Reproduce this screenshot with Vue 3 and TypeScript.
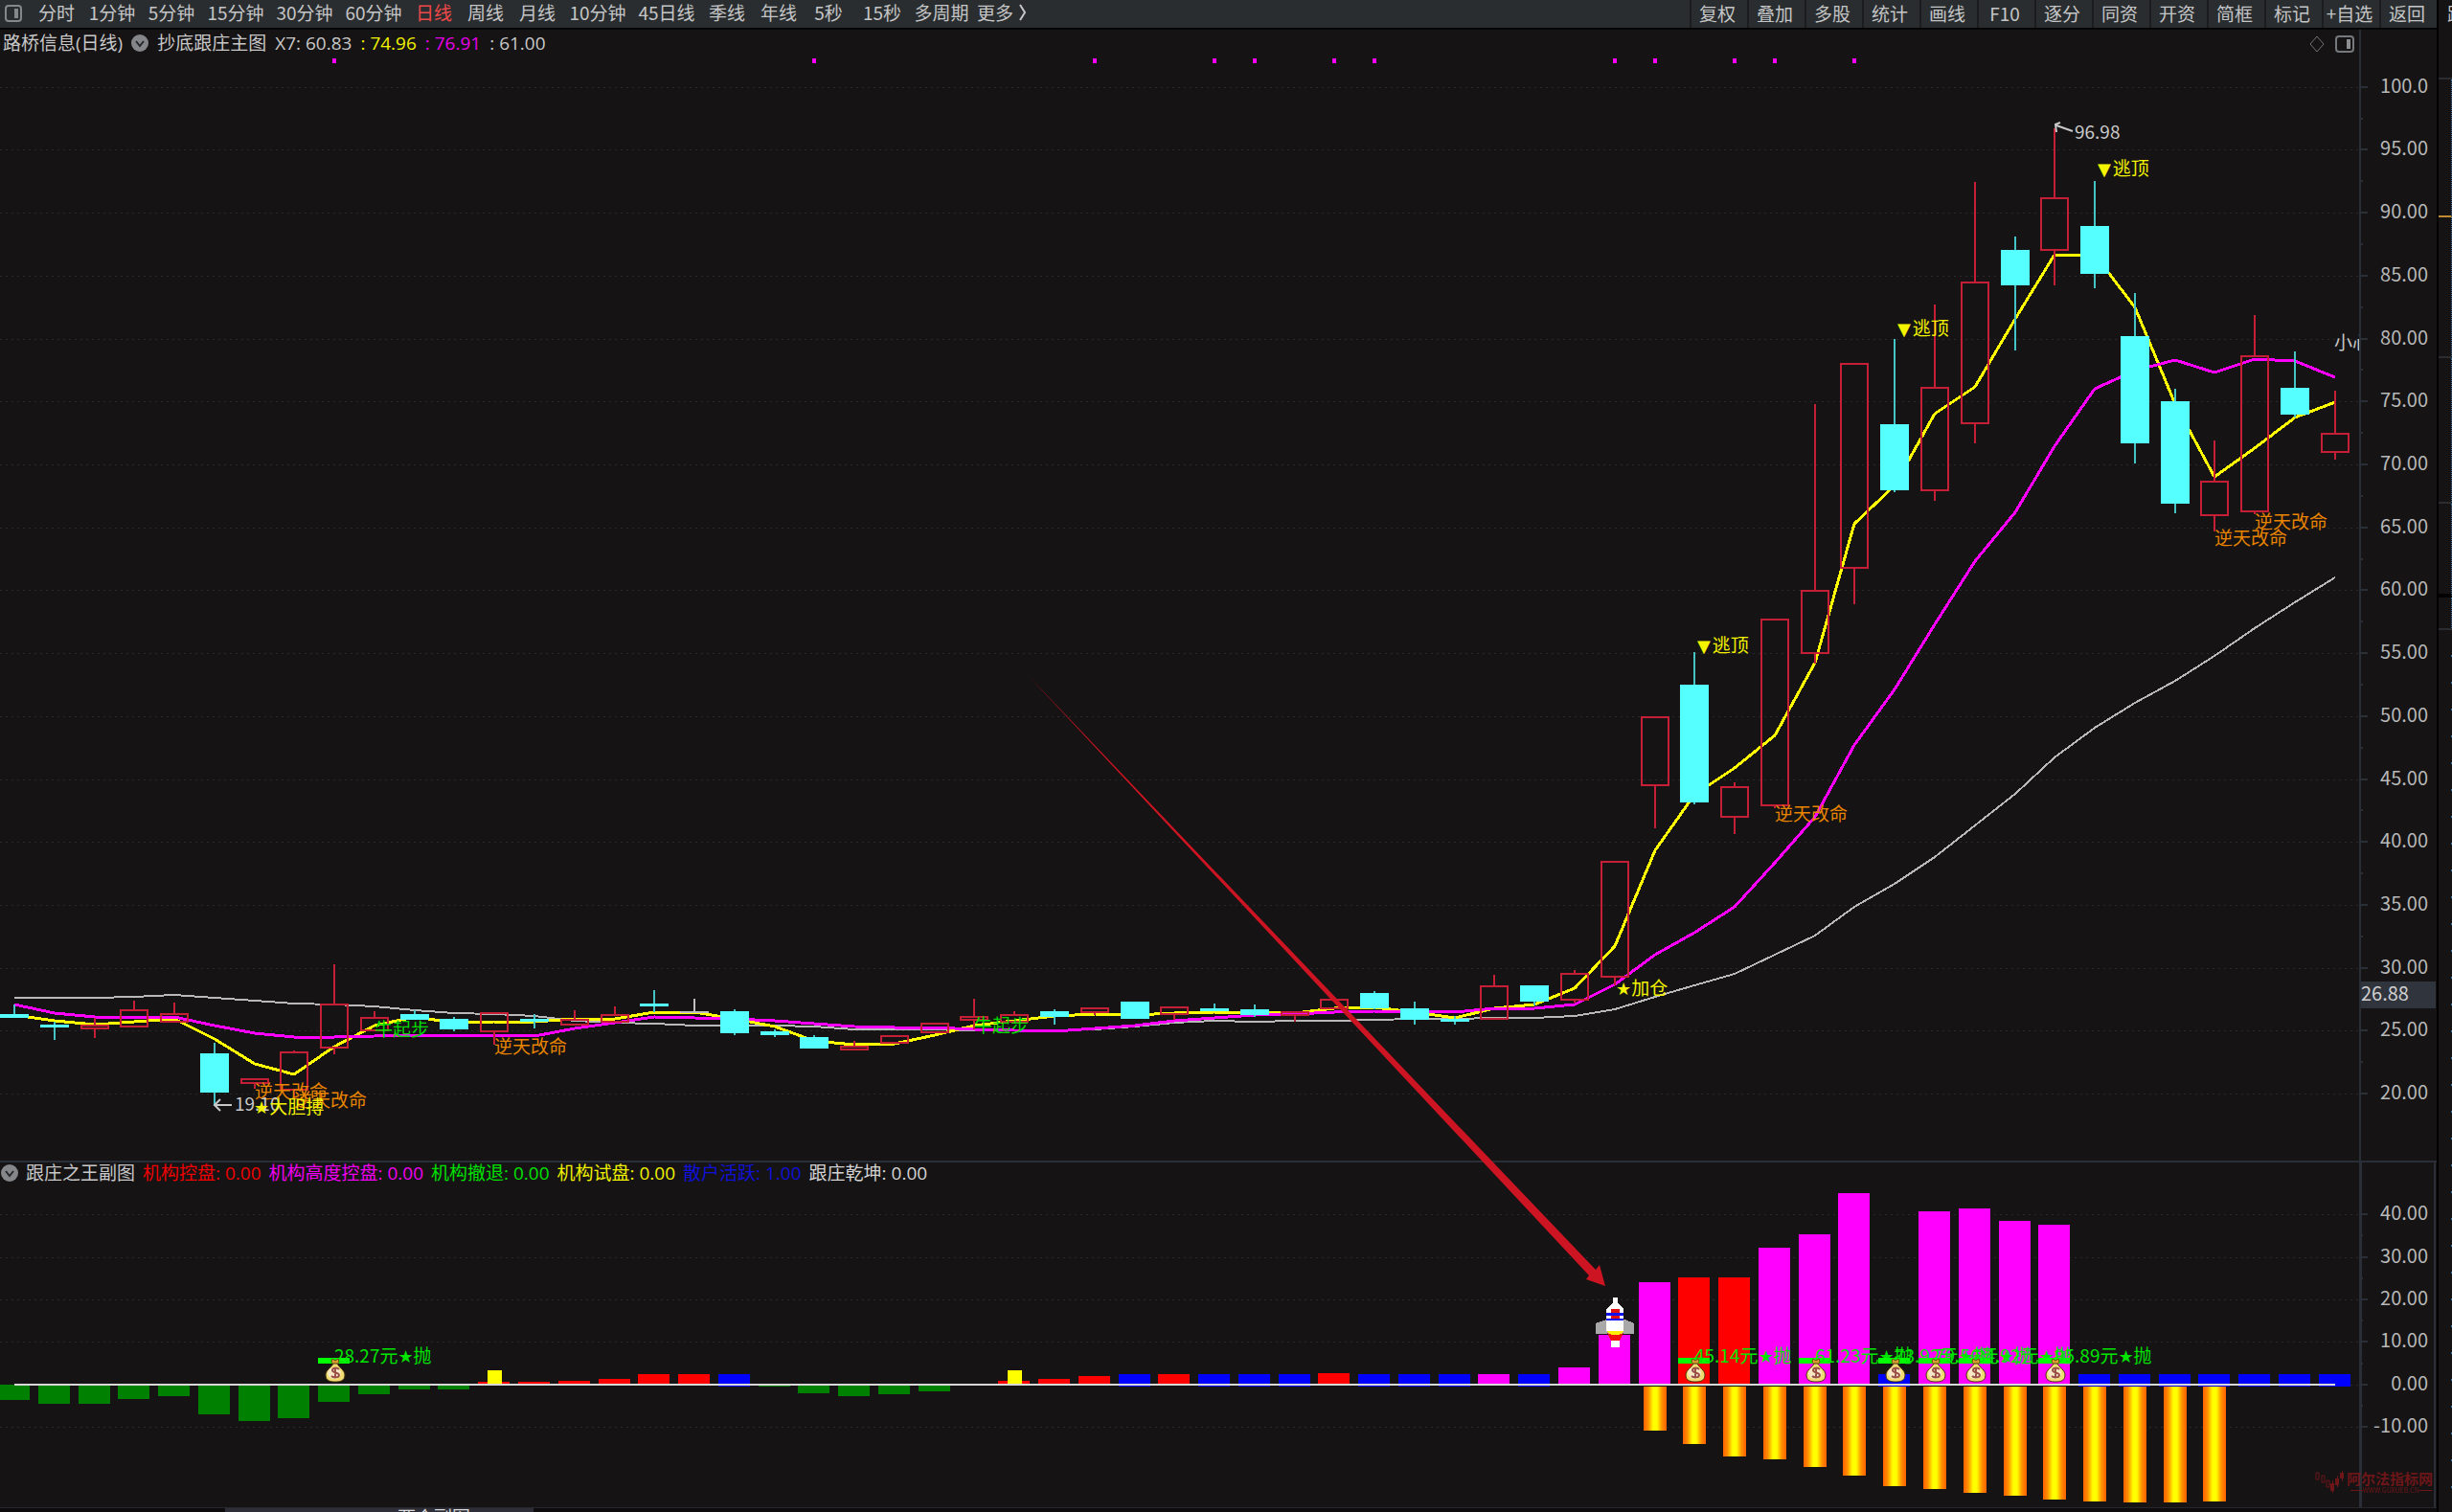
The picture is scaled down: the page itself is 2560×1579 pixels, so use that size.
<script setup lang="ts">
type Tone = 'up' | 'down' | 'flat'
type Candle = [tone: Tone, high: number, top: number, bottom: number, low: number]
type Bar = [index: number, color: string, top: number, bottom: number]

const periods: { label: string; size: string; active?: boolean }[] = [
  { label: '分时', size: 'm' },
  { label: '1分钟', size: 'l' },
  { label: '5分钟', size: 'l' },
  { label: '15分钟', size: 'xl' },
  { label: '30分钟', size: 'xl' },
  { label: '60分钟', size: 'xl' },
  { label: '日线', size: 'm', active: true },
  { label: '周线', size: 'm' },
  { label: '月线', size: 'm' },
  { label: '10分钟', size: 'xl' },
  { label: '45日线', size: 'xl' },
  { label: '季线', size: 'm' },
  { label: '年线', size: 'm' },
  { label: '5秒', size: 's' },
  { label: '15秒', size: 'l' },
  { label: '多周期', size: 'l' },
]
const tools = ['复权', '叠加', '多股', '统计', '画线', 'F10', '逐分', '同资', '开资', '简框', '标记', '+自选', '返回']

const plotRight = 2463
const cx = (i: number) => Math.round(15 + i * 41.77)

const priceY = (v: number) => Math.round(90.7 + (100 - v) * 13.143)
const priceLevels = Array.from({ length: 17 }, (_, k) => 100 - k * 5)
const priceLabel = (v: number) => (v === 100 ? '100.0' : v.toFixed(2))
const subY = (v: number) => Math.round(1445.7 - v * 4.44)
const subLevels = [40, 30, 20, 10, 0, -10]

// High, body top, body bottom and low of each day, as chart ordinates
const candles: Candle[] = [
  ['down', 1049, 1059, 1063, 1063],
  ['down', 1067, 1070, 1073, 1086],
  ['up', 1063, 1071, 1074, 1084],
  ['up', 1045, 1055, 1072, 1072],
  ['up', 1047, 1059, 1067, 1067],
  ['down', 1089, 1100, 1141, 1155],
  ['up', 1127, 1127, 1131, 1137],
  ['up', 1097, 1099, 1138, 1146],
  ['up', 1007, 1049, 1094, 1101],
  ['up', 1056, 1063, 1076, 1076],
  ['down', 1055, 1059, 1065, 1065],
  ['down', 1062, 1064, 1075, 1077],
  ['up', 1058, 1058, 1077, 1091],
  ['down', 1059, 1064, 1067, 1074],
  ['up', 1055, 1065, 1070, 1070],
  ['up', 1051, 1060, 1067, 1067],
  ['down', 1034, 1048, 1051, 1057],
  ['flat', 1043, 1056, 1058, 1058],
  ['down', 1054, 1056, 1079, 1081],
  ['down', 1075, 1077, 1081, 1083],
  ['down', 1081, 1083, 1095, 1095],
  ['up', 1087, 1093, 1096, 1096],
  ['up', 1082, 1082, 1089, 1089],
  ['up', 1069, 1069, 1078, 1078],
  ['up', 1043, 1062, 1065, 1075],
  ['up', 1056, 1060, 1067, 1067],
  ['down', 1054, 1056, 1062, 1070],
  ['up', 1053, 1053, 1057, 1060],
  ['down', 1046, 1046, 1064, 1064],
  ['up', 1052, 1052, 1059, 1065],
  ['down', 1048, 1053, 1056, 1056],
  ['down', 1049, 1054, 1060, 1062],
  ['up', 1057, 1057, 1060, 1067],
  ['up', 1044, 1044, 1053, 1053],
  ['down', 1035, 1037, 1053, 1054],
  ['down', 1046, 1053, 1065, 1070],
  ['down', 1061, 1064, 1067, 1070],
  ['up', 1018, 1030, 1064, 1064],
  ['down', 1029, 1029, 1046, 1050],
  ['up', 1013, 1017, 1044, 1047],
  ['up', 900, 900, 1020, 1029],
  ['up', 749, 749, 820, 865],
  ['down', 681, 715, 838, 840],
  ['up', 817, 822, 853, 871],
  ['up', 647, 647, 841, 844],
  ['up', 422, 617, 682, 693],
  ['up', 380, 380, 593, 631],
  ['down', 354, 443, 512, 514],
  ['up', 318, 405, 512, 523],
  ['up', 190, 295, 442, 463],
  ['down', 247, 261, 298, 366],
  ['up', 134, 207, 261, 298],
  ['down', 189, 236, 286, 301],
  ['down', 306, 351, 463, 484],
  ['down', 406, 419, 526, 536],
  ['up', 460, 503, 538, 555],
  ['up', 329, 372, 534, 537],
  ['down', 367, 405, 433, 436],
  ['up', 408, 453, 472, 480],
]

const fast = [1060, 1066, 1070, 1067, 1064, 1085, 1111, 1122, 1093, 1071, 1062, 1068, 1067, 1067, 1064, 1064, 1057, 1057, 1064, 1072, 1087, 1091, 1090, 1081, 1071, 1066, 1061, 1059, 1060, 1058, 1057, 1057, 1058, 1053, 1052, 1057, 1063, 1053, 1049, 1032, 988, 888, 830, 802, 768, 692, 547, 507, 432, 404, 333, 266, 266, 321, 422, 498, 468, 436, 420]
const middle = [1049, 1058, 1062, 1062, 1062, 1071, 1079, 1083, 1083, 1082, 1081, 1081, 1081, 1082, 1074, 1068, 1062, 1063, 1064, 1066, 1069, 1072, 1073, 1073, 1075, 1076, 1077, 1074, 1071, 1066, 1063, 1060, 1059, 1057, 1056, 1056, 1057, 1053, 1053, 1049, 1028, 997, 974, 947, 901, 853, 778, 720, 652, 586, 535, 466, 406, 387, 376, 389, 375, 377, 394]
const slow = [1042, 1042, 1042, 1041, 1039, 1042, 1045, 1048, 1049, 1051, 1055, 1058, 1059, 1061, 1066, 1068, 1069, 1071, 1071, 1071, 1072, 1075, 1075, 1075, 1076, 1076, 1076, 1075, 1072, 1068, 1066, 1067, 1066, 1066, 1065, 1064, 1064, 1063, 1063, 1061, 1054, 1041, 1029, 1017, 997, 977, 947, 923, 895, 862, 829, 791, 760, 734, 711, 685, 656, 629, 603]
const trace = (ys: number[]) => ys.map((y, i) => `${cx(i)},${y}`).join(' ')

const alertDots = [8, 20, 27, 30, 31, 33, 34, 40, 41, 43, 44, 46]

const turnLabels: [number, number][] = [[6, 1147], [7, 1156], [12, 1100], [44, 857], [55, 569], [56, 552]]
const escapeLabels: [number, number][] = [[42, 681], [47, 350], [52, 183]]
const startLabels: [number, number][] = [[9, 1082], [24, 1078]]

const GREEN = '#008000'
const RED = '#ff0000'
const BLUE = '#0000ff'
const PINK = '#ff00ff'
const dropBars: Bar[] = ([[0, 1462], [1, 1466], [2, 1466], [3, 1461], [4, 1458], [5, 1477], [6, 1484], [7, 1481], [8, 1464], [9, 1456], [10, 1451], [11, 1451], [19, 1448], [20, 1455], [21, 1458], [22, 1456], [23, 1453]] as [number, number][])
  .map(([i, bottom]) => [i, GREEN, 1446, bottom])
const redBars: Bar[] = ([[12, 1443], [13, 1443], [14, 1442], [15, 1440], [16, 1435], [17, 1435], [25, 1442], [26, 1440], [27, 1437], [29, 1435], [33, 1434], [42, 1334], [43, 1334]] as [number, number][])
  .map(([i, top]) => [i, RED, top, 1446])
const pinkBars: Bar[] = ([[37, 1435], [39, 1428], [40, 1394], [41, 1339], [44, 1303], [45, 1289], [46, 1246], [48, 1265], [49, 1262], [50, 1275], [51, 1279]] as [number, number][])
  .map(([i, top]) => [i, PINK, top, 1446])
const blueBars: Bar[] = [18, 28, 30, 31, 32, 34, 35, 36, 38, 47, 52, 53, 54, 55, 56, 57, 58].map((i) => [i, BLUE, 1435, 1448])
const bars: Bar[] = [...dropBars, ...redBars, ...pinkBars, ...blueBars]
const probes = [12, 25]

const goldBars: [number, number][] = [[41, 1494], [42, 1508], [43, 1521], [44, 1524], [45, 1532], [46, 1541], [47, 1552], [48, 1555], [49, 1559], [50, 1562], [51, 1566], [52, 1568], [53, 1569], [54, 1569], [55, 1568]]
const sells: [number, string][] = [[8, '28.27'], [42, '45.14'], [45, '61.23'], [47, '73.92'], [48, '79.56'], [49, '84.92'], [51, '95.89']]

const subLegend = [
  { name: '机构控盘', value: '0.00', color: '#f00000' },
  { name: '机构高度控盘', value: '0.00', color: '#f000f0' },
  { name: '机构撤退', value: '0.00', color: '#00e000' },
  { name: '机构试盘', value: '0.00', color: '#f0f000' },
  { name: '散户活跃', value: '1.00', color: '#1010d8' },
  { name: '跟庄乾坤', value: '0.00', color: '#d4d4d4' },
]
</script>

<template>
  <div class="terminal">
    <main class="workspace">
      <header class="toolbar">
        <button class="layout-btn" aria-label="布局">
          <svg width="18" height="18" viewBox="0 0 18 18"><rect x="1" y="1" width="16" height="16" rx="3" fill="none" stroke="#85888b" stroke-width="2" /><rect x="10" y="4" width="4" height="10" fill="#85888b" /></svg>
        </button>
        <nav class="periods">
          <button v-for="p in periods" :key="p.label" :class="['period', p.size, { active: p.active }]">{{ p.label }}</button>
          <button class="period more">更多
            <svg width="8" height="18" viewBox="0 0 8 18"><path d="M1 1l5 8-5 8" fill="none" stroke="currentColor" stroke-width="2" /></svg>
          </button>
        </nav>
        <nav class="tools">
          <button v-for="t in tools" :key="t" class="tool">{{ t }}</button>
        </nav>
      </header>

      <section class="panel">
        <div class="legend">
          <span>路桥信息(日线)</span>
          <button class="fold" aria-label="折叠主图"><svg width="18" height="18" viewBox="0 0 18 18"><circle cx="9" cy="9" r="9" fill="#85868a" /><path d="M5 7l4 5 4-5" fill="none" stroke="#26262a" stroke-width="2" /></svg></button>
          <span>抄底跟庄主图</span>
          <span>X7: 60.83</span>
          <span class="yellow">: 74.96</span>
          <span class="pink">: 76.91</span>
          <span>: 61.00</span>
        </div>
        <div class="panel-icons">
          <svg width="18" height="18" viewBox="0 0 18 18"><path d="M9 1l7 8-7 8-7-8z" fill="none" stroke="#707276" stroke-width="1" /></svg>
          <svg width="20" height="18" viewBox="0 0 20 18"><rect x="1" y="1" width="18" height="16" rx="3" fill="none" stroke="#76797c" stroke-width="2" /><rect x="12" y="4" width="4" height="10" fill="#8c8f92" /></svg>
        </div>
        <svg class="chart" viewBox="0 31 2544 1181">
          <g class="crisp">
            <line v-for="v in priceLevels" :key="v" x1="0" :x2="plotRight" :y1="priceY(v)" :y2="priceY(v)" class="grid" />
            <rect v-for="i in alertDots" :key="i" :x="cx(i) - 2" y="61" width="4" height="5" fill="#ff00ff" />
            <polyline :points="trace(slow)" class="line slow" />
            <polyline :points="trace(fast)" class="line fast" />
            <polyline :points="trace(middle)" class="line middle" />
          </g>
          <g v-for="(c, i) in candles" :key="i" :class="['crisp', c[0]]">
            <rect :x="cx(i) - 1" :y="c[1]" width="2" :height="c[2] - c[1]" class="wick" />
            <rect :x="cx(i) - 1" :y="c[3]" width="2" :height="c[4] - c[3]" class="wick" />
            <rect v-if="c[0] === 'up'" :x="cx(i) - 14" :y="c[2]" width="28" :height="c[3] - c[2]" class="body" />
            <rect v-else :x="cx(i) - 15" :y="c[2]" width="30" :height="c[3] - c[2]" class="body" />
          </g>

          <text v-for="[i, y] in startLabels" :key="'s' + i" :x="cx(i)" :y="y" class="note green">牛起步</text>
          <text v-for="[i, y] in turnLabels" :key="'t' + i" :x="cx(i)" :y="y" class="note orange">逆天改命</text>
          <text v-for="[i, y] in escapeLabels" :key="'e' + i" :x="cx(i) + 3" :y="y" class="note gold"><tspan class="mark">▼</tspan><tspan dx="2">逃顶</tspan></text>
          <path d="M242 1154h-17M230 1148l-6 6 6 6" class="pointer" />
          <text x="245" y="1160" class="note plain">19.10</text>
          <text x="265" y="1163" class="note gold"><tspan class="mark">★</tspan>大胆搏</text>
          <text x="1687" y="1039" class="note gold"><tspan class="mark">★</tspan>加仓</text>
          <path d="M2164 137l-17-6M2151 128l-5 2 1 8" class="pointer" />
          <text x="2166" y="145" class="note plain">96.98</text>
          <svg x="2437" y="345" width="26" height="26"><text x="0" y="20" class="note plain">小心</text></svg>

          <g class="crisp axis">
            <rect :x="plotRight" y="31" width="2" height="1181" />
            <rect v-for="v in priceLevels" :key="v" :x="plotRight" :y="priceY(v) - 1" width="9" height="2" />
            <rect v-for="v in priceLevels.slice(0, 16)" :key="'m' + v" :x="plotRight" :y="priceY(v - 2.5) - 1" width="4" height="2" />
          </g>
          <text v-for="v in priceLevels" :key="'l' + v" x="2535" :y="priceY(v) + 6" class="scale">{{ priceLabel(v) }}</text>
          <rect x="2465" y="1025" width="78" height="28" fill="#30343d" />
          <text x="2465" y="1045" class="scale current">26.88</text>
        </svg>
      </section>

      <section class="panel">
        <div class="legend sub">
          <button class="fold" aria-label="折叠副图"><svg width="18" height="18" viewBox="0 0 18 18"><circle cx="9" cy="9" r="9" fill="#85868a" /><path d="M5 7l4 5 4-5" fill="none" stroke="#26262a" stroke-width="2" /></svg></button>
          <span>跟庄之王副图</span>
          <span v-for="l in subLegend" :key="l.name" :style="{ color: l.color }">{{ l.name }}: {{ l.value }}</span>
        </div>
        <svg class="chart" viewBox="0 1212 2544 362">
          <defs>
            <linearGradient id="gold">
              <stop offset="0" stop-color="#ff6000" />
              <stop offset=".2" stop-color="#ff9000" />
              <stop offset=".42" stop-color="#ffff00" />
              <stop offset=".58" stop-color="#ffff00" />
              <stop offset=".8" stop-color="#ff9000" />
              <stop offset="1" stop-color="#ff6000" />
            </linearGradient>
            <g id="bag">
              <path d="M8 1l3 2 3-2 1 3-2 3h-4L7 4z" fill="#d8a030" stroke="#6a4a18" />
              <path d="M9 6h4c2 4 8 7 8 12 0 6-5 7-10 7S1 24 1 18C1 13 7 10 9 6z" fill="#f0dc70" stroke="#4a3812" stroke-width="1" />
              <ellipse cx="10" cy="16" rx="7" ry="6" fill="#f6e8c4" />
              <path d="M15 12c-2-2-7-2-7 1s7 2 7 5-6 3-8 1M11 10v11" fill="none" stroke="#9a5048" stroke-width="2" />
            </g>
          </defs>
          <g class="crisp">
            <line v-for="v in subLevels" :key="v" x1="0" :x2="plotRight" :y1="subY(v)" :y2="subY(v)" class="grid" />
            <rect v-for="b in bars" :key="b[0]" :x="cx(b[0]) - 17" :y="b[2]" width="33" :height="b[3] - b[2]" :fill="b[1]" />
            <rect v-for="i in probes" :key="'p' + i" :x="cx(i) - 7" y="1431" width="15" height="15" fill="#ffff00" />
            <rect v-for="g in goldBars" :key="'g' + g[0]" :x="cx(g[0]) - 12" y="1448" width="24" :height="g[1] - 1448" fill="url(#gold)" />
            <rect x="15" y="1445" width="2423" height="2" fill="#d8d8d8" />
          </g>

          <g v-for="[i, price] in sells" :key="'s' + i">
            <rect :x="cx(i) - 17" y="1418" width="33" height="6" fill="#00ff00" />
            <text :x="cx(i)" y="1423" class="note sell">{{ price }}元<tspan class="mark">★</tspan>抛</text>
            <use href="#bag" :x="cx(i) - 10" y="1418" />
          </g>

          <g class="crisp">
            <path d="M1666 1382l11-4h20l9 4v11h-40z" fill="#a8a8a8" />
            <path d="M1684 1355h5v5l6 7v23h-18v-23l7-7z" fill="#fff" />
            <path d="M1682 1367h9v10h-9z" fill="#e01010" />
            <path d="M1677 1371h18v3h-18zM1677 1377h18v2h-18z" fill="#1010f0" />
            <path d="M1677 1390h18l-4 4h-10z" fill="#ffee00" />
            <path d="M1678 1392l5 2h7l5-2-4 8h-9z" fill="#f01010" />
            <path d="M1682 1400h9v7h-9z" fill="#fff" />
          </g>

          <g class="crisp axis">
            <rect x="0" y="1212" width="2544" height="2" />
            <rect :x="plotRight" y="1212" width="3" height="362" />
            <rect x="2541" y="1212" width="2" height="362" />
            <rect v-for="v in subLevels" :key="v" :x="plotRight" :y="subY(v) - 1" width="9" height="2" />
            <rect v-for="v in subLevels.slice(0, 5)" :key="'m' + v" :x="plotRight" :y="subY(v - 5) - 1" width="4" height="2" />
          </g>
          <text v-for="v in subLevels" :key="'l' + v" x="2535" :y="subY(v) + 6" class="scale">{{ v.toFixed(2) }}</text>

          <g class="watermark">
            <path d="M2418 1538h3v7h-3zM2424 1541h3v7h-3zM2429 1546h3v7h-3z" class="hollow" />
            <path d="M2433 1549h4v8h-4zM2438 1544h4v7h-4zM2443 1538h4v6h-4zM2435 1546h1v13h-1zM2440 1541h1v12h-1zM2445 1536h1v11h-1z" />
            <text x="2450" y="1550" class="brand">阿尔法指标网</text>
            <text x="2496" y="1559" class="url">WWW.GUXUEB.CN</text>
            <path d="M2454 1556h13v1h-13zM2526 1556h13v1h-13z" />
          </g>
        </svg>
      </section>

      <footer class="timeline">
        <div class="cursor-date"><span>两个副图</span></div>
      </footer>

      <svg class="callout" viewBox="0 0 2544 1579" aria-hidden="true">
        <path d="M1073 705L1666 1326l4-5 6 22-20-7 3-4z" fill="#cc1422" />
      </svg>
    </main>

    <aside class="quote-edge">
      <div class="edge-title">路</div>
      <div class="edge-block first"></div>
      <div class="edge-block second"></div>
      <div class="edge-block third"></div>
      <div class="edge-block fourth"></div>
      <div class="edge-block head"></div>
      <div class="edge-block ticks"></div>
    </aside>
  </div>
</template>

<style>
body {
  background: #151314;
}
</style>

<style scoped>
.terminal {
  display: flex;
  background: #151314;
  color: #c8c8c8;
  font-family: 'Noto Sans CJK SC', 'Open Sans', sans-serif;
  font-size: 19px;
  line-height: 28px;
}
.workspace {
  position: relative;
  flex: 1;
  min-width: 0;
}
.callout {
  position: absolute;
  top: 0;
  left: 0;
  width: 100%;
  height: auto;
  pointer-events: none;
}
button {
  padding: 0;
  border: 0;
  background: none;
  color: inherit;
  font: inherit;
  white-space: nowrap;
}
.toolbar {
  display: flex;
  height: 29px;
  background: #2a2d2f;
  border-bottom: 2px solid #050505;
  color: #c4c5c6;
  overflow: hidden;
}
.layout-btn {
  display: flex;
  align-items: center;
  width: 32px;
  padding: 0 0 2px 5px;
  box-sizing: border-box;
}
.periods {
  display: flex;
  flex: 1;
}
.period {
  display: flex;
  align-items: center;
  justify-content: center;
  padding-bottom: 3px;
}
.s { width: 50px; }
.m { width: 54px; }
.l { width: 62px; }
.xl { width: 72px; }
.more {
  gap: 6px;
  padding-left: 6px;
}
.active {
  color: #f04848;
}
.tools {
  display: flex;
}
.tool {
  width: 60px;
  padding: 0 4px 3px 0;
  border-left: 2px solid #1b1c1e;
  text-align: center;
}
.panel {
  position: relative;
}
.chart {
  display: block;
  width: 100%;
  height: auto;
}
.legend {
  position: absolute;
  top: 0;
  left: 3px;
  display: flex;
  align-items: center;
  gap: 9px;
  font-family: 'Open Sans', 'Noto Sans CJK SC', sans-serif;
  white-space: nowrap;
}
.legend.sub {
  left: 1px;
  gap: 8px;
  line-height: 26px;
}
.fold {
  display: flex;
}
.panel-icons {
  position: absolute;
  top: 6px;
  right: 86px;
  display: flex;
  gap: 10px;
}
.yellow { color: #f0f000; }
.pink { color: #e800e8; }

.crisp { shape-rendering: crispEdges; }
.grid {
  stroke: #2b292c;
  stroke-width: 1;
  stroke-dasharray: 2 4;
}
.line { fill: none; }
.slow {
  stroke: #b8b8b8;
  stroke-width: 2;
}
.fast {
  stroke: #ffff00;
  stroke-width: 3;
}
.middle {
  stroke: #ff00ff;
  stroke-width: 3;
}
.up .wick { fill: #c41f36; }
.up .body {
  fill: none;
  stroke: #c41f36;
  stroke-width: 2;
}
.down .wick { fill: #44c4c4; }
.down .body { fill: #55ffff; }
.flat rect { fill: #c0c0c0; }
.axis rect { fill: #2a2e36; }
.scale {
  fill: #b8b8b8;
  font-size: 20px;
  text-anchor: end;
}
.scale.current {
  fill: #d0d0d0;
  text-anchor: start;
}
.note { font-size: 19px; }
.mark {
  font-family: 'DejaVu Sans', sans-serif;
  font-size: 18px;
}
.orange { fill: #e88400; }
.gold { fill: #f4f400; }
.green { fill: #00dc00; }
.sell { fill: #00e400; }
.plain { fill: #c8c8c8; }
.pointer {
  fill: none;
  stroke: #c8c8c8;
  stroke-width: 2;
}
.watermark { fill: #6c1619; }
.hollow {
  fill: none;
  stroke: #6c1619;
}
.brand {
  font-size: 15px;
  font-weight: 700;
}
.url { font-size: 7px; text-anchor: middle; }

.timeline {
  height: 5px;
  background: #0f0c0d;
  border-top: 1px solid #25272d;
  box-sizing: border-box;
  overflow: hidden;
}
.cursor-date {
  width: 322px;
  margin-left: 235px;
  background: #2d2e38;
  color: #d8d8d8;
  line-height: 18px;
  text-align: right;
}
.cursor-date span {
  margin-right: 66px;
}
.quote-edge {
  width: 14px;
  border-left: 2px solid #020202;
  overflow: hidden;
}
.edge-title {
  height: 83px;
  padding-left: 9px;
  border-bottom: 2px solid #2a2c30;
  box-sizing: border-box;
}
.edge-block {
  box-sizing: border-box;
  border-right: 1px dotted #3c6f9c;
}
.first {
  height: 144px;
  border-bottom: 2px solid #c08a30;
}
.second {
  height: 147px;
  border-bottom: 2px solid #2a2c30;
}
.third {
  height: 152px;
  border-bottom: 2px solid #2a2c30;
}
.fourth {
  height: 98px;
  border-bottom: 4px solid #020202;
}
.head {
  height: 34px;
  border-bottom: 2px solid #2a2c30;
}
.ticks {
  height: 921px;
  border-right: 0;
  background: repeating-linear-gradient(#151314 0 26px, #3c6f9c 26px 28px) right / 1px 100% no-repeat;
}
</style>
